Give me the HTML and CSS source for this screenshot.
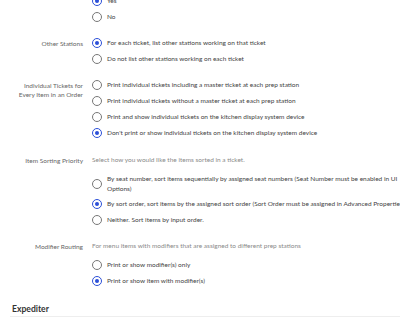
FILE: index.html
```html
<!DOCTYPE html>
<html lang="en">
<head>
    <meta charset="UTF-8">
    <meta name="viewport" content="width=device-width, initial-scale=1.0">
    <title>Kitchen Settings</title>
    <link rel="stylesheet" href="styles.css">
</head>
<body>
    <div class="settings">
        <div class="setting first">
            <div class="setting-label"></div>
            <div class="options">
                <div class="option"><span class="radio checked"></span><span class="option-text">Yes</span></div>
                <div class="option"><span class="radio"></span><span class="option-text">No</span></div>
            </div>
        </div>

        <div class="setting">
            <div class="setting-label">Other Stations</div>
            <div class="options">
                <div class="option"><span class="radio checked"></span><span class="option-text">For each ticket, list other stations working on that ticket</span></div>
                <div class="option"><span class="radio"></span><span class="option-text">Do not list other stations working on each ticket</span></div>
            </div>
        </div>

        <div class="setting">
            <div class="setting-label">Individual Tickets for Every Item in an Order</div>
            <div class="options">
                <div class="option"><span class="radio"></span><span class="option-text">Print individual tickets including a master ticket at each prep station</span></div>
                <div class="option"><span class="radio"></span><span class="option-text">Print individual tickets without a master ticket at each prep station</span></div>
                <div class="option"><span class="radio"></span><span class="option-text">Print and show individual tickets on the kitchen display system device</span></div>
                <div class="option"><span class="radio checked"></span><span class="option-text">Don't print or show individual tickets on the kitchen display system device</span></div>
            </div>
        </div>

        <div class="setting has-desc">
            <div class="setting-label">Item Sorting Priority</div>
            <div class="options">
                <div class="description">Select how you would like the items sorted in a ticket.</div>
                <div class="option"><span class="radio"></span><span class="option-text">By seat number, sort items sequentially by assigned seat numbers (Seat Number must be enabled in UI Options)</span></div>
                <div class="option"><span class="radio checked"></span><span class="option-text nowrap">By sort order, sort items by the assigned sort order (Sort Order must be assigned in Advanced Properties)</span></div>
                <div class="option"><span class="radio"></span><span class="option-text">Neither. Sort items by input order.</span></div>
            </div>
        </div>

        <div class="setting has-desc last">
            <div class="setting-label">Modifier Routing</div>
            <div class="options">
                <div class="description">For menu items with modifiers that are assigned to different prep stations</div>
                <div class="option"><span class="radio"></span><span class="option-text">Print or show modifier(s) only</span></div>
                <div class="option"><span class="radio checked"></span><span class="option-text">Print or show item with modifier(s)</span></div>
            </div>
        </div>
    </div>

    <h2 class="section-title">Expediter</h2>
</body>
</html>
```

FILE: styles.css
```css
body {
    font-family: 'Lato', 'Liberation Sans', sans-serif;
    margin: 0;
    padding: 0;
    background-color: #fff;
    color: #333;
    overflow: hidden;
}
.setting {
    display: flex;
    margin-bottom: 10px;
}
.setting.first {
    margin-top: -7px;
}
.setting.last {
    margin-top: -1px;
}
.setting-label {
    width: 84px;
    flex-shrink: 0;
    padding: 4px 1px 0 10px;
    box-sizing: border-box;
    text-align: right;
    font-size: 6.5px;
    line-height: 9px;
    color: #666;
}
.setting.has-desc .setting-label {
    padding-top: 4.5px;
}
.options {
    flex: 1;
    min-width: 0;
    padding-left: 8px;
}
.description {
    font-size: 6.5px;
    line-height: 10px;
    margin: 4px 0 6px;
    color: #8a8a8a;
    white-space: nowrap;
}
.option {
    display: flex;
    align-items: center;
    min-height: 16px;
}
.option-text {
    font-size: 6.5px;
    line-height: 10px;
    padding: 2.5px 0;
    color: #444;
}
.option-text.nowrap {
    white-space: nowrap;
}
.radio {
    width: 10px;
    height: 10px;
    box-sizing: border-box;
    border: 1px solid #777;
    border-radius: 50%;
    flex-shrink: 0;
    margin: 0 5px 0 0;
    position: relative;
}
.radio.checked {
    border: 1.3px solid #2b4fd8;
}
.radio.checked::after {
    content: '';
    position: absolute;
    left: 1.6px;
    top: 1.6px;
    width: 4.2px;
    height: 4.2px;
    border-radius: 50%;
    background-color: #2b4fd8;
}
.section-title {
    font-size: 8.6px;
    font-weight: bold;
    color: #333;
    margin: 15px 0 0 10px;
    padding: 0 0 2px 2px;
    border-bottom: 1px solid #eee;
    line-height: 10px;
}
```
